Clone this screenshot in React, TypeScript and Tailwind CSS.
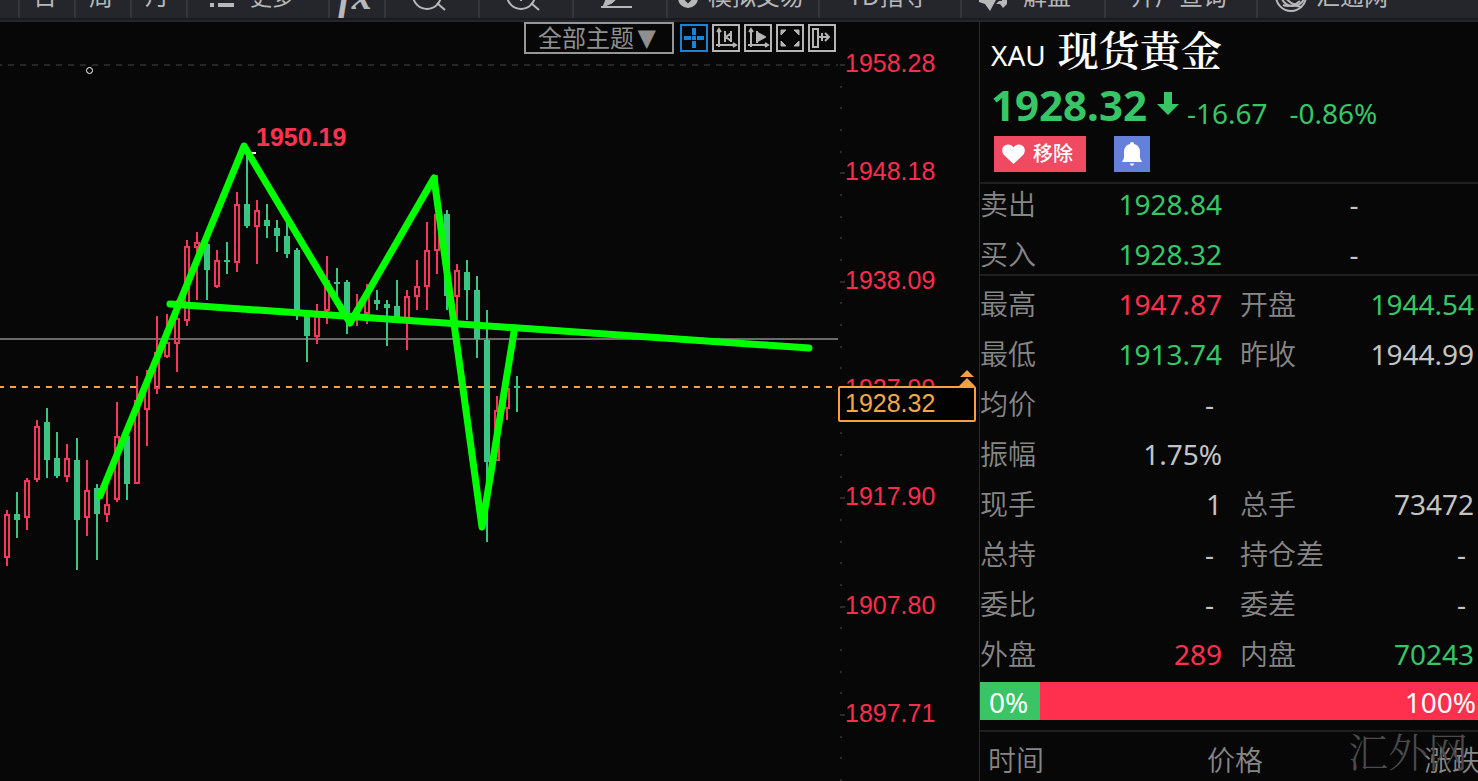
import React from "react";

type Tone = "up" | "down" | "flat";

const toneClass: Record<Tone, string> = {
  up: "text-[#ff304d]",
  down: "text-[#36c666]",
  flat: "text-[#c4c4c4]",
};

// x, high, low, body top, body bottom, rising
type Candle = [number, number, number, number, number, boolean];

const candles: Candle[] = [
  [7, 510, 566, 514, 557, true],
  [17, 492, 538, 514, 520, false],
  [27, 478, 530, 480, 517, true],
  [37, 420, 482, 426, 479, true],
  [47, 408, 478, 422, 460, false],
  [57, 432, 478, 458, 476, false],
  [67, 444, 482, 458, 476, true],
  [77, 438, 570, 460, 520, false],
  [87, 460, 536, 490, 517, true],
  [97, 484, 560, 488, 514, false],
  [107, 486, 522, 504, 514, true],
  [117, 402, 502, 436, 499, true],
  [127, 430, 500, 436, 484, false],
  [137, 376, 484, 400, 483, true],
  [147, 370, 446, 382, 409, true],
  [157, 316, 394, 352, 388, true],
  [167, 314, 358, 342, 356, true],
  [177, 300, 372, 318, 343, true],
  [187, 240, 326, 246, 320, true],
  [197, 232, 300, 242, 247, true],
  [207, 240, 300, 244, 270, false],
  [217, 250, 288, 260, 286, true],
  [227, 242, 274, 260, 262, false],
  [237, 192, 272, 204, 262, true],
  [247, 150, 228, 204, 226, false],
  [257, 200, 264, 210, 226, true],
  [267, 204, 238, 220, 226, false],
  [277, 220, 252, 228, 236, false],
  [287, 220, 258, 236, 254, false],
  [297, 248, 320, 250, 314, false],
  [307, 315, 362, 316, 336, false],
  [317, 304, 344, 316, 336, true],
  [327, 256, 324, 280, 310, true],
  [337, 268, 302, 282, 284, false],
  [347, 280, 334, 282, 320, false],
  [357, 294, 326, 308, 316, true],
  [367, 284, 324, 294, 313, true],
  [377, 290, 310, 300, 304, false],
  [387, 300, 346, 304, 308, false],
  [397, 280, 320, 306, 320, false],
  [407, 290, 350, 296, 320, true],
  [417, 260, 310, 286, 296, true],
  [427, 222, 310, 250, 286, true],
  [437, 175, 274, 214, 250, true],
  [447, 210, 310, 214, 296, false],
  [457, 264, 322, 270, 296, true],
  [467, 260, 320, 272, 290, false],
  [477, 276, 358, 290, 339, false],
  [487, 310, 542, 340, 462, false],
  [497, 396, 460, 410, 460, true],
  [507, 386, 420, 388, 408, true],
  [517, 376, 412, 386, 388, false],
];

const axisLabels = ["1958.28", "1948.18", "1938.09", "1927.99", "1917.90", "1907.80", "1897.71"];
// Five ticks per label interval; every fifth one is the longer, labelled tick.
const axisTicks = Array.from({ length: 34 }, (_, i) => ({
  y: 43 + Math.round((i * 65) / 3),
  major: i % 5 === 0,
}));

function CandleShape({ data }: { data: Candle }) {
  const [x, high, low, top, bottom, rising] = data;
  if (rising) {
    return (
      <g stroke="#f5365a" strokeWidth={2} fill="none">
        <path d={`M${x} ${high}V${top + 1}M${x} ${bottom}V${low}`} />
        <rect x={x - 2} y={top + 1} width={4} height={bottom - top - 1} />
      </g>
    );
  }
  return (
    <g fill="#3ac583">
      <rect x={x - 1} y={high} width={2} height={low - high} />
      <rect x={x - 3} y={top} width={6} height={bottom - top} />
    </g>
  );
}

function ToolItem({ className, label, children }: { className: string; label: string; children: React.ReactNode }) {
  return (
    <button
      type="button"
      aria-label={label}
      className={`flex h-11 shrink-0 items-center justify-center whitespace-nowrap border-[#34363c] text-2xl leading-6 ${className}`}
    >
      {children}
    </button>
  );
}

function Toolbar() {
  return (
    <header className="flex h-[22px] shrink-0 items-end overflow-hidden border-b-2 border-[#25252b] bg-[#24262b] text-[#b8b8ba]">
      <nav className="flex h-[46px] w-full shrink-0 items-start border-b-2 border-[#1a1a1f]">
        <ToolItem className="w-5 border-r-2" label="分时"><span /></ToolItem>
        <ToolItem className="w-14 border-r-2 pr-1" label="日">日</ToolItem>
        <ToolItem className="w-14 border-r-2 pr-1" label="周">周</ToolItem>
        <ToolItem className="w-14 border-r-2 pr-1" label="月">月</ToolItem>
        <ToolItem className="w-[142px] gap-4 border-r-2 pr-3" label="更多">
          <svg width="24" height="24" viewBox="0 0 24 24" fill="currentColor">
            <path d="M0 2h4v4H0zM8 2h16v4H8zM0 10h4v4H0zM8 10h16v4H8zM0 19h4v4H0zM8 19h16v4H8z" />
          </svg>
          <span className="text-[22px]">更多</span>
        </ToolItem>
        <ToolItem className="w-14 border-r-2 pr-1" label="fx">
          <span className="font-['Liberation_Serif',serif] text-[40px] font-bold italic">fx</span>
        </ToolItem>
        <ToolItem className="w-[94px] border-r-2 pr-2" label="缩小">
          <svg width="36" height="36" viewBox="0 0 36 36" fill="none" stroke="currentColor" strokeWidth="2">
            <circle cx="17" cy="17" r="14" />
            <path d="m27 25 8 7M11 17h12" />
          </svg>
        </ToolItem>
        <ToolItem className="w-[94px] border-r-2 pr-2" label="放大">
          <svg width="36" height="36" viewBox="0 0 36 36" fill="none" stroke="currentColor" strokeWidth="2">
            <circle cx="17" cy="17" r="14" />
            <path d="m27 25 8 7M11 17h12M17 11v12" />
          </svg>
        </ToolItem>
        <ToolItem className="w-[94px] border-r-2 pr-2" label="画线">
          <svg width="34" height="34" viewBox="0 0 34 34" fill="none" stroke="currentColor">
            <path d="M2 28h31" strokeWidth="2" />
            <path d="m4 28 4-10L23 3l6 6-16 15z" fill="currentColor" />
          </svg>
        </ToolItem>
        <ToolItem className="w-[152px] gap-[10px] border-r-2 pr-1" label="模拟交易">
          <svg width="20" height="28" viewBox="0 0 20 28">
            <circle cx="10" cy="16" r="10" fill="currentColor" />
            <path d="M10 6v14M5 15l5 5 5-5" stroke="#24262b" strokeWidth="2" fill="none" />
          </svg>
          模拟交易
        </ToolItem>
        <ToolItem className="w-[142px] border-r-2 pr-1" label="TD指导">TD指导</ToolItem>
        <ToolItem className="w-36 gap-4 border-r-2 pr-4" label="解盘">
          <svg width="28" height="32" viewBox="0 0 28 32" fill="currentColor">
            <path d="M0 4h20v16h-3l-6 11-5-7-6-2zM21 11h7v13l-4 4-3-4h-4l3-3h3z" />
          </svg>
          解盘
        </ToolItem>
        <ToolItem className="w-[152px] border-r-2 pr-1" label="开户查询">开户查询</ToolItem>
        <ToolItem className="w-[162px] gap-2 pr-4" label="汇通网">
          <svg width="34" height="34" viewBox="0 0 34 34" fill="none" stroke="currentColor" strokeWidth="2">
            <circle cx="17" cy="17" r="15" />
            <circle cx="19" cy="15" r="12" />
            <path d="M5 10c7 12 14 17 23 18M9 26c5 2 12 1 17-4" />
          </svg>
          汇通网
        </ToolItem>
      </nav>
    </header>
  );
}

const chartTools = [
  { label: "十字光标", active: true, path: <path d="M14 4v7M14 17v7M4 14h7M17 14h7M12 14h4" strokeWidth="4" /> },
  {
    label: "平移坐标",
    active: false,
    path: <path d="M7 5v18M4 21h20M5 8l2-3 2 3M21 19l3 2-3 2M13 7v11M19 7v11M19 9l-5 4 5 4" strokeWidth="2" />,
  },
  {
    label: "播放",
    active: false,
    path: (
      <>
        <path d="M7 5v18M4 21h20M5 8l2-3 2 3M21 19l3 2-3 2M13 7v12" strokeWidth="2" />
        <path d="m13 8 9 5-9 5z" fill="currentColor" />
      </>
    ),
  },
  {
    label: "全屏",
    active: false,
    path: <path d="M5 11V6h5zM18 6h5v5zM5 17v5h5zM18 22h5v-5z" fill="currentColor" strokeWidth="1" />,
  },
  {
    label: "移到最右",
    active: false,
    path: <path d="M5 5h5v18H5zM10 13h11M14 9v8M17 9l4 4-4 4" strokeWidth="2" />,
  },
];

function ChartControls() {
  return (
    <div className="absolute right-[2px] top-0 flex items-center gap-[6px]">
      <div className="relative text-[#8f8f8f]">
        <select
          aria-label="主题"
          className="h-8 w-[150px] appearance-none border-2 border-[#969696] bg-[#070707] pl-3 text-2xl leading-7 outline-none"
        >
          <option>全部主题</option>
        </select>
        <span className="pointer-events-none absolute right-[18px] top-[2px] font-['DejaVu_Sans',sans-serif] text-2xl leading-7">▼</span>
      </div>
      <div className="flex gap-1">
        {chartTools.map((tool) => (
          <button
            key={tool.label}
            type="button"
            aria-label={tool.label}
            className={tool.active ? "text-[#1684d8]" : "text-[#b5b5b5]"}
          >
            <svg width="28" height="28" viewBox="0 0 28 28" fill="none" stroke="currentColor" className="block">
              <rect x="1" y="1" width="26" height="26" strokeWidth="2" />
              {tool.path}
            </svg>
          </button>
        ))}
      </div>
    </div>
  );
}

function Chart() {
  return (
    <section className="relative min-w-0 flex-1 overflow-hidden">
      <svg className="block h-full w-full" role="img" aria-label="XAU K线图">
        <g transform="translate(0 -22)">
          <line x1="-4" y1="65" x2="100%" y2="65" stroke="#262626" strokeWidth="2" strokeDasharray="6 6" />
          <line x1="0" y1="339" x2="100%" y2="339" stroke="#6a6a6a" strokeWidth="2" />
          <line x1="-2" y1="387" x2="100%" y2="387" stroke="#f9a144" strokeWidth="2" strokeDasharray="6 6" />
          {candles.map((c) => (
            <CandleShape key={c[0]} data={c} />
          ))}
          <path d="M248 153h8" stroke="#fff" strokeWidth="2" />
          <g fill="none" stroke="#00ff00" strokeWidth="7" strokeLinecap="round" strokeLinejoin="round">
            <path d="M100 496 244 146 350 323 434 178 482 527 514 332" />
            <path d="M170 304 809 348" />
          </g>
          <circle cx="89.500" cy="70.500" r="3" fill="#070707" stroke="#fff" />
          <text x="256" y="146" fill="#fa3450" className="font-['Liberation_Sans',sans-serif] text-[25px] font-bold">
            1950.19
          </text>
        </g>
      </svg>
      <ChartControls />
    </section>
  );
}

function PriceAxis() {
  return (
    <aside className="relative w-[141px] shrink-0 font-['Liberation_Sans',sans-serif] text-[25px] leading-7">
      <svg width="8" height="759" className="absolute left-0 top-0" stroke="#2a2a2a" strokeWidth="2">
        {axisTicks.map(({ y, major }) => (
          <path key={y} d={major ? `M2 ${y}h5` : `M2 ${y}h2`} />
        ))}
      </svg>
      <ul className="flex h-[705px] flex-col justify-between pl-[7px] pt-[27px] text-[#fa2d4c]">
        {axisLabels.map((label) => (
          <li key={label}>{label}</li>
        ))}
      </ul>
      <svg width="16" height="16" viewBox="0 0 16 16" fill="#f99f41" className="absolute right-1 top-[348px]">
        <path d="M8 0 15 7H1zM8 8l8 8H0z" />
      </svg>
      <output className="absolute left-0 right-[3px] top-[364px] h-9 rounded-[2px] border-2 border-[#f99f41] bg-[#020202] pl-[5px] pt-px text-[#f0a848]">
        1928.32
      </output>
    </aside>
  );
}

interface Quote {
  label: string;
  value: string;
  tone: Tone;
  label2?: string;
  value2?: string;
  tone2?: Tone;
}

const bidAsk: Quote[] = [
  { label: "卖出", value: "1928.84", tone: "down", value2: "-" },
  { label: "买入", value: "1928.32", tone: "down", value2: "-" },
];

const quotes: Quote[] = [
  { label: "最高", value: "1947.87", tone: "up", label2: "开盘", value2: "1944.54", tone2: "down" },
  { label: "最低", value: "1913.74", tone: "down", label2: "昨收", value2: "1944.99", tone2: "flat" },
  { label: "均价", value: "-", tone: "flat" },
  { label: "振幅", value: "1.75%", tone: "flat" },
  { label: "现手", value: "1", tone: "flat", label2: "总手", value2: "73472", tone2: "flat" },
  { label: "总持", value: "-", tone: "flat", label2: "持仓差", value2: "-", tone2: "flat" },
  { label: "委比", value: "-", tone: "flat", label2: "委差", value2: "-", tone2: "flat" },
  { label: "外盘", value: "289", tone: "up", label2: "内盘", value2: "70243", tone2: "down" },
];

function Value({ text }: { text?: string }) {
  return <span className={text === "-" ? "pr-2" : ""}>{text}</span>;
}

function QuoteTable({ rows, className }: { rows: Quote[]; className: string }) {
  return (
    <div className={`border-t-2 border-[#1f1f1f] ${className}`}>
      <table className="w-full table-fixed text-[28px] leading-10">
        <colgroup>
          <col className="w-20" />
          <col className="w-[162px]" />
          <col className="w-[114px]" />
          <col />
        </colgroup>
        <tbody>
          {rows.map((row) => (
            <tr key={row.label} className="group">
              <th scope="row" className="pb-[10px] text-left font-[350] text-[#868686] group-last:pb-0">{row.label}</th>
              <td className={`pb-[10px] text-right group-last:pb-0 ${toneClass[row.tone]}`}>
                <Value text={row.value} />
              </td>
              {row.label2 ? (
                <>
                  <th scope="row" className="whitespace-nowrap pb-[10px] pl-[18px] text-left font-[350] text-[#868686] group-last:pb-0">{row.label2}</th>
                  <td className={`pb-[10px] pr-1 text-right group-last:pb-0 ${toneClass[row.tone2 ?? "flat"]}`}>
                    <Value text={row.value2} />
                  </td>
                </>
              ) : (
                <td colSpan={2} className="pb-[10px] pl-[18px] pr-[10px] text-center text-[#c4c4c4] group-last:pb-0">{row.value2}</td>
              )}
            </tr>
          ))}
        </tbody>
      </table>
    </div>
  );
}

function QuotePanel() {
  return (
    <aside className="relative w-[499px] shrink-0 overflow-hidden border-l border-[#2a2a2a]">
      <div className="flex h-40 flex-col pl-[11px]">
        <h1 className="flex h-[54px] shrink-0 items-baseline gap-3 whitespace-nowrap text-white">
          <span className="text-[28px] leading-[54px]">XAU</span>
          <span className="font-['Noto_Serif_CJK_SC','Noto_Sans_CJK_SC',serif] text-[41px] font-semibold leading-[54px]">现货黄金</span>
        </h1>
        <p className="flex h-[58px] shrink-0 items-center whitespace-nowrap text-[28px] text-[#36c666]">
          <strong className="text-[42px] font-bold leading-[58px]">1928.32</strong>
          <svg width="22" height="26" viewBox="0 0 22 26" fill="currentColor" className="ml-[10px] mr-2">
            <path d="M7 0h8v12h7L11 23 0 12h7z" />
          </svg>
          <span className="pt-4">-16.67</span>
          <span className="ml-[22px] pt-4">-0.86%</span>
        </p>
        <div className="flex items-start gap-7 pl-[3px] pt-[2px]">
          <button type="button" className="flex h-9 w-[92px] items-center gap-2 bg-[#f04a63] pl-2 text-xl font-medium leading-5 text-white">
            <svg width="23" height="20" viewBox="0 0 23 20" fill="currentColor">
              <path d="M11.500 20 1.500 10.500C-1 7 0 1 6 .6c2.500 0 4.500 1.200 5.500 3 1-1.800 3-3 5.500-3 6 .4 7 6.400 4.500 9.900z" />
            </svg>
            移除
          </button>
          <button type="button" aria-label="提醒" className="flex h-9 w-9 items-center justify-center bg-[#6480da] text-white">
            <svg width="22" height="24" viewBox="0 0 22 24" fill="currentColor">
              <path d="M11 0c1.500 0 2 .8 2 2 4 1 6 4 6 8v6l2 4H1l2-4v-6c0-4 2-7 6-8 0-1.200.5-2 2-2zM9 21.500h4c-.5 3-3.500 3-4 0z" />
            </svg>
          </button>
        </div>
      </div>
      <QuoteTable rows={bidAsk} className="h-[92px]" />
      <QuoteTable rows={quotes} className="pt-2" />
      <div className="mt-2 flex h-[38px] text-[28px] leading-[40px] text-white">
        <span className="w-[60px] bg-[#3ac466] pl-[9px]">0%</span>
        <span className="flex-1 bg-[#ff304d] pr-[2px] text-right">100%</span>
      </div>
      <table className="mt-[10px] w-[510px] table-fixed border-t-2 border-[#1f1f1f] text-[28px] leading-[56px] text-[#868686]">
        <thead>
          <tr>
            <th className="pl-2 text-left font-[350]">时间</th>
            <th className="text-center font-[350]">价格</th>
            <th className="pr-[10px] text-right font-[350]">涨跌</th>
          </tr>
        </thead>
      </table>
      <div className="pointer-events-none absolute bottom-[11px] right-[10px] font-['Noto_Serif_CJK_SC','Noto_Sans_CJK_SC',serif] text-[40px] font-light leading-10 text-[#4b4b4b]">
        汇外网
      </div>
    </aside>
  );
}

export default function App() {
  return (
    <div className="flex h-screen flex-col overflow-hidden bg-[#070707] font-['Noto_Sans','Noto_Sans_CJK_SC',sans-serif]">
      <Toolbar />
      <main className="flex min-h-0 flex-1">
        <Chart />
        <PriceAxis />
        <QuotePanel />
      </main>
    </div>
  );
}
